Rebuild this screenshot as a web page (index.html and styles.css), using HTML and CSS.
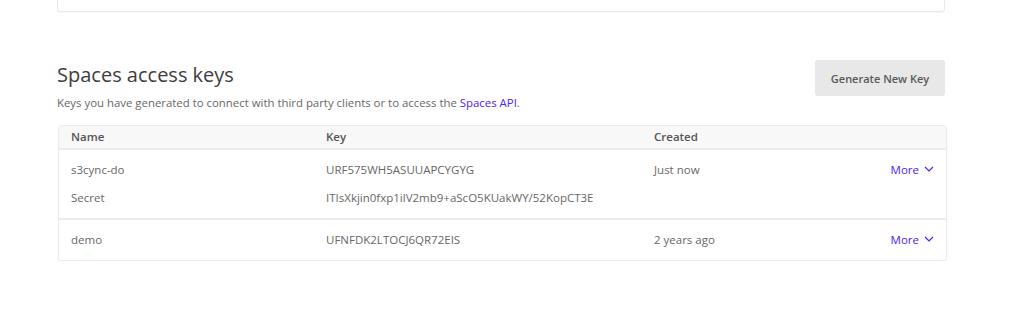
FILE: index.html
```html
<!DOCTYPE html>
<html lang="en">
<head>
    <meta charset="UTF-8">
    <title>Spaces access keys</title>
    <link rel="stylesheet" href="styles.css">
</head>
<body>
    <div class="page">
        <div class="prev-card"></div>

        <section class="keys">
            <div class="keys-head">
                <div>
                    <h2>Spaces access keys</h2>
                    <p class="lead">Keys you have generated to connect with third party clients or to access the <a href="#">Spaces API</a>.</p>
                </div>
                <button class="btn-generate">Generate New Key</button>
            </div>

            <div class="key-table">
                <div class="key-row head">
                    <span>Name</span>
                    <span>Key</span>
                    <span>Created</span>
                    <span></span>
                </div>
                <div class="key-row">
                    <span>s3cync-do</span>
                    <span>URF575WH5ASUUAPCYGYG</span>
                    <span>Just now</span>
                    <a class="more" href="#">More
                        <svg width="10" height="6" viewBox="0 0 10 6"><path d="M1 1l4 4 4-4" fill="none" stroke="currentColor" stroke-width="1.2"/></svg>
                    </a>
                    <span>Secret</span>
                    <span>ITIsXkjin0fxp1ilV2mb9+aScO5KUakWY/52KopCT3E</span>
                    <span></span>
                    <span></span>
                </div>
                <div class="key-row">
                    <span>demo</span>
                    <span>UFNFDK2LTOCJ6QR72EIS</span>
                    <span>2 years ago</span>
                    <a class="more" href="#">More
                        <svg width="10" height="6" viewBox="0 0 10 6"><path d="M1 1l4 4 4-4" fill="none" stroke="currentColor" stroke-width="1.2"/></svg>
                    </a>
                </div>
            </div>
        </section>
    </div>
</body>
</html>
```

FILE: styles.css
```css
* {
    margin: 0;
    padding: 0;
    box-sizing: border-box;
}

body {
    font-family: 'Open Sans', Arial, sans-serif;
    background: #fff;
    color: #676767;
}

.page {
    width: 890px;
    margin-left: 57px;
}

.prev-card {
    width: 888px;
    height: 22px;
    margin-top: -10px;
    border: 1px solid #e9e9e9;
    border-radius: 3px;
    box-shadow: 0 1px 1px rgba(0, 0, 0, 0.03);
}

.keys {
    margin-top: 48px;
}

.keys-head {
    display: flex;
    justify-content: space-between;
    width: 888px;
}

h2 {
    font-size: 20px;
    font-weight: 400;
    color: #3d3d3d;
    line-height: 28px;
    margin-top: 1px;
}

.lead {
    font-size: 11.4px;
    margin-top: 6px;
    line-height: 16px;
}

.lead a {
    color: #4a22ff;
    text-decoration: none;
}

.btn-generate {
    width: 130px;
    height: 36px;
    background: #e8e8e8;
    border: none;
    border-radius: 3px;
    font-family: inherit;
    font-size: 11px;
    font-weight: 600;
    color: #595959;
}

.key-table {
    margin-top: 14px;
    margin-left: 1px;
    width: 889px;
    border: 1px solid #ececec;
    border-radius: 3px;
    box-shadow: 0 1px 2px rgba(0, 0, 0, 0.05);
    font-size: 11.5px;
}

.key-row {
    display: grid;
    grid-template-columns: 255px 328px 1fr auto;
    padding: 11px 12px 12px;
    row-gap: 11px;
    line-height: 17px;
    border-top: 2px solid #ececec;
}

.key-row.head {
    background: #f8f8f8;
    border-top: none;
    padding: 2px 12px 2px;
    font-weight: 600;
    color: #555;
    line-height: 18px;
}

.more {
    color: #4a22ff;
    text-decoration: none;
    display: flex;
    align-items: center;
    gap: 5px;
    margin-top: -1px;
}
```
